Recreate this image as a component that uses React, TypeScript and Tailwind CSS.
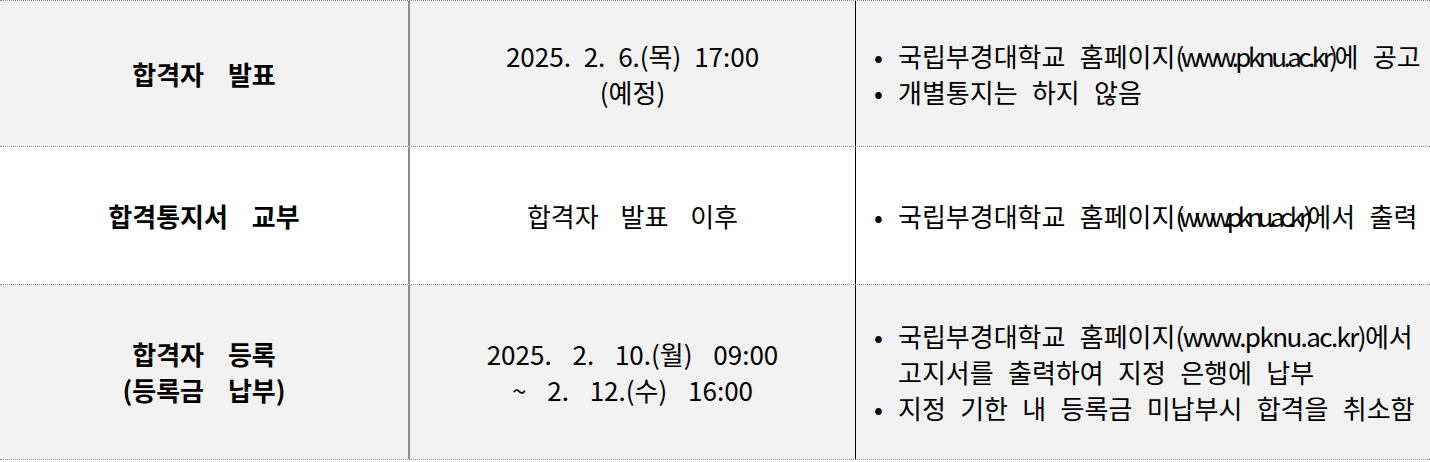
type Seg = { t: string; cls?: string };

const rows = [
  {
    title: ["합격자 발표"],
    date: ["2025. 2. 6.(목) 17:00", "(예정)"],
    dateWs: "[word-spacing:7px]",
    notes: [
      [[{ t: "국립부경대학교 홈페이지" }, { t: "(www.pknu.ac.kr)", cls: "tracking-[-3.5px]" }, { t: "에 공고" }]],
      [[{ t: "개별통지는 하지 않음" }]],
    ] as Seg[][][],
    h: "h-[146px]",
    bg: "bg-[#f2f2f2]",
  },
  {
    title: ["합격통지서 교부"],
    date: ["합격자 발표 이후"],
    dateWs: "[word-spacing:16px]",
    notes: [
      [[{ t: "국립부경대학교 홈페이지" }, { t: "(www.pknu.ac.kr)", cls: "tracking-[-5.2px]" }, { t: "에서 출력" }]],
    ] as Seg[][][],
    h: "h-[138px]",
    bg: "bg-white",
  },
  {
    title: ["합격자 등록", "(등록금 납부)"],
    date: ["2025. 2. 10.(월) 09:00", "~ 2. 12.(수) 16:00"],
    dateWs: "[word-spacing:15px]",
    notes: [
      [
        [{ t: "국립부경대학교 홈페이지" }, { t: "(www.pknu.ac.kr)", cls: "tracking-[-1.6px]" }, { t: "에서" }],
        [{ t: "고지서를 출력하여 지정 은행에 납부" }],
      ],
      [[{ t: "지정 기한 내 등록금 미납부시 합격을 취소함" }]],
    ] as Seg[][][],
    h: "h-[175px]",
    bg: "bg-[#f2f2f2]",
  },
];

export default function App() {
  return (
    <div
      className="w-[1430px] bg-white text-black text-[26px] leading-[36px]"
      style={{ fontFamily: '"Noto Sans CJK KR", "Noto Sans", sans-serif' }}
    >
      <div className="border-t border-dotted border-[#8a8a8a]">
        {rows.map((r, i) => (
          <div
            key={i}
            className={`grid grid-cols-[410px_446px_1fr] border-b border-dotted border-[#8a8a8a] ${r.h} ${r.bg}`}
          >
            <div className="flex flex-col items-center justify-center border-r-2 border-[#8c8c8c] font-bold [word-spacing:18px]">
              {r.title.map((t) => (
                <span key={t}>{t}</span>
              ))}
            </div>
            <div className={`flex flex-col items-center justify-center border-r border-black ${r.dateWs}`}>
              {r.date.map((t) => (
                <span key={t}>{t}</span>
              ))}
            </div>
            <div className="flex flex-col justify-center pl-[18px] [word-spacing:8.5px]">
              {r.notes.map((n, j) => (
                <div key={j} className="flex">
                  <span className="w-[24px] shrink-0">•</span>
                  <div className="flex flex-col">
                    {n.map((line, k) => (
                      <span key={k} className="whitespace-nowrap">
                        {line.map((s, m) => (
                          <span key={m} className={s.cls}>
                            {s.t}
                          </span>
                        ))}
                      </span>
                    ))}
                  </div>
                </div>
              ))}
            </div>
          </div>
        ))}
      </div>
    </div>
  );
}
